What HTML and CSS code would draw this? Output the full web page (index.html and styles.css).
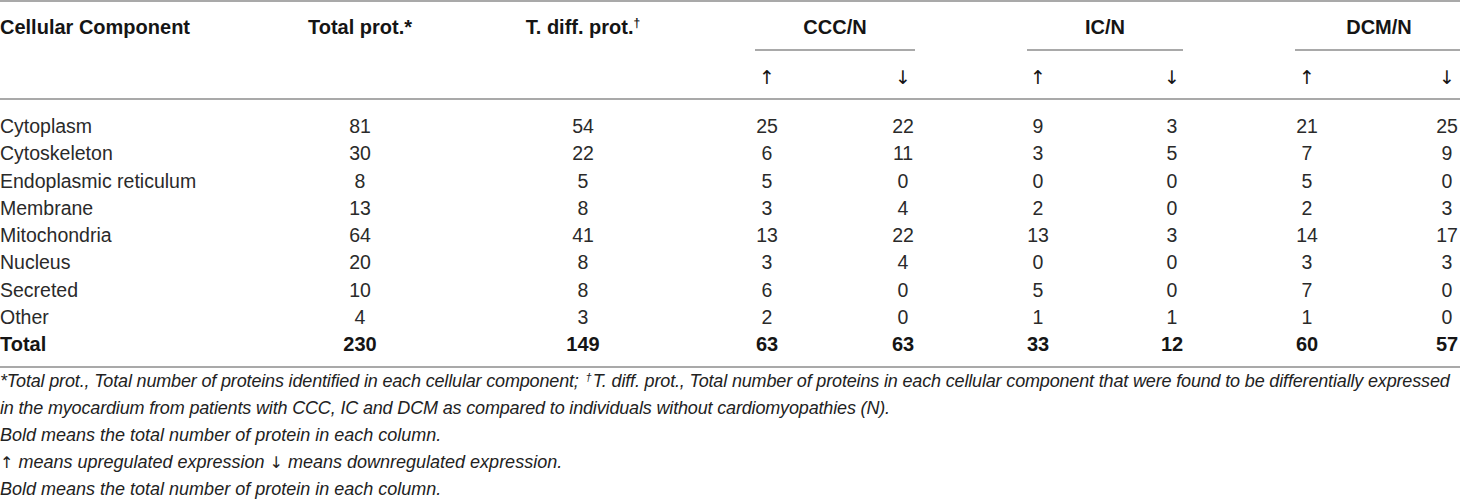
FILE: index.html
```html
<!DOCTYPE html>
<html lang="en">

<head>
    <meta charset="UTF-8">
    <meta name="viewport" content="width=device-width, initial-scale=1.0">
    <title>Cellular component table</title>
    <link rel="stylesheet" href="styles.css">
</head>

<body>
    <div class="frame">
        <table class="data-table">
            <colgroup>
                <col class="c-name">
                <col class="c-total">
                <col class="c-diff">
                <col class="c-sub">
                <col class="c-sub">
                <col class="c-sub-n">
                <col class="c-sub-n">
                <col class="c-sub">
                <col class="c-sub-w">
            </colgroup>
            <thead>
                <tr>
                    <th rowspan="2" class="head-left">Cellular Component</th>
                    <th rowspan="2" class="head-top">Total prot.*</th>
                    <th rowspan="2" class="head-top">T. diff. prot.<sup>†</sup></th>
                    <th colspan="2" class="group"><div class="group-label">CCC/N</div></th>
                    <th colspan="2" class="group"><div class="group-label">IC/N</div></th>
                    <th colspan="2" class="group"><div class="group-label">DCM/N</div></th>
                </tr>
                <tr class="arrows">
                    <th>↑</th>
                    <th>↓</th>
                    <th>↑</th>
                    <th>↓</th>
                    <th>↑</th>
                    <th>↓</th>
                </tr>
            </thead>
            <tbody>
                <tr>
                    <td>Cytoplasm</td>
                    <td>81</td><td>54</td><td>25</td><td>22</td><td>9</td><td>3</td><td>21</td><td>25</td>
                </tr>
                <tr>
                    <td>Cytoskeleton</td>
                    <td>30</td><td>22</td><td>6</td><td>11</td><td>3</td><td>5</td><td>7</td><td>9</td>
                </tr>
                <tr>
                    <td>Endoplasmic reticulum</td>
                    <td>8</td><td>5</td><td>5</td><td>0</td><td>0</td><td>0</td><td>5</td><td>0</td>
                </tr>
                <tr>
                    <td>Membrane</td>
                    <td>13</td><td>8</td><td>3</td><td>4</td><td>2</td><td>0</td><td>2</td><td>3</td>
                </tr>
                <tr>
                    <td>Mitochondria</td>
                    <td>64</td><td>41</td><td>13</td><td>22</td><td>13</td><td>3</td><td>14</td><td>17</td>
                </tr>
                <tr>
                    <td>Nucleus</td>
                    <td>20</td><td>8</td><td>3</td><td>4</td><td>0</td><td>0</td><td>3</td><td>3</td>
                </tr>
                <tr>
                    <td>Secreted</td>
                    <td>10</td><td>8</td><td>6</td><td>0</td><td>5</td><td>0</td><td>7</td><td>0</td>
                </tr>
                <tr>
                    <td>Other</td>
                    <td>4</td><td>3</td><td>2</td><td>0</td><td>1</td><td>1</td><td>1</td><td>0</td>
                </tr>
                <tr class="total">
                    <td>Total</td>
                    <td>230</td><td>149</td><td>63</td><td>63</td><td>33</td><td>12</td><td>60</td><td>57</td>
                </tr>
            </tbody>
        </table>
    </div>

    <div class="notes">
        <p class="note-long">*Total prot., Total number of proteins identified in each cellular component; <sup>†</sup>T. diff. prot., Total number of proteins in each cellular component that were found to be differentially expressed in the myocardium from patients with CCC, IC and DCM as compared to individuals without cardiomyopathies (N).</p>
        <p>Bold means the total number of protein in each column.</p>
        <p><span class="arrow">↑</span> means upregulated expression <span class="arrow">↓</span> means downregulated expression.</p>
        <p>Bold means the total number of protein in each column.</p>
    </div>
</body>

</html>
```

FILE: styles.css
```css
* {
    padding: 0;
    margin: 0;
    box-sizing: border-box;
}

body {
    background: #fff;
    color: #1f1f1f;
    font-family: 'Liberation Sans', Arial, sans-serif;
    overflow: hidden;
}

.frame {
    width: 100%;
    overflow: hidden;
}

.data-table {
    width: 1519px;
    table-layout: fixed;
    border-collapse: separate;
    border-spacing: 0;
    border-top: 2px solid #a9a9a9;
    border-bottom: 2px solid #a9a9a9;
    font-size: 19.5px;
}

.c-name { width: 253px; }
.c-total { width: 214px; }
.c-diff { width: 232px; }
.c-sub { width: 136px; }
.c-sub-n { width: 134px; }
.c-sub-w { width: 144px; }

th {
    font-size: 20px;
    font-weight: 700;
    color: #151515;
    line-height: 20px;
    text-align: center;
}

.head-left,
.head-top {
    vertical-align: top;
    padding-top: 15px;
    border-bottom: 2px solid #a9a9a9;
}

.head-left {
    text-align: left;
}

sup {
    font-size: 12px;
    line-height: 0;
    vertical-align: 7px;
}

.group {
    padding: 0 56px;
}

.group-label {
    padding: 15px 0 12px;
    border-bottom: 2px solid #a9a9a9;
}

.arrows th {
    font-family: 'DejaVu Sans', sans-serif;
    font-weight: 400;
    font-size: 19px;
    padding: 16px 0 11px;
    border-bottom: 2px solid #a9a9a9;
}

td {
    line-height: 27.25px;
    text-align: center;
    color: #2a2a2a;
    white-space: nowrap;
}

td:first-child {
    text-align: left;
}

tbody tr:first-child td {
    padding-top: 13px;
}

tbody tr:last-child td {
    padding-bottom: 8px;
}

.total td {
    font-size: 20px;
    font-weight: 700;
    color: #151515;
}

.notes {
    font-size: 18px;
    font-style: italic;
    line-height: 26.75px;
    color: #222;
}

.note-long {
    letter-spacing: -0.16px;
}

.notes sup {
    font-size: 11px;
    vertical-align: 6px;
    letter-spacing: 0;
    margin: 0 1px 0 2px;
}

.arrow {
    font-family: 'DejaVu Sans', sans-serif;
    font-style: normal;
    font-size: 16px;
}
```
